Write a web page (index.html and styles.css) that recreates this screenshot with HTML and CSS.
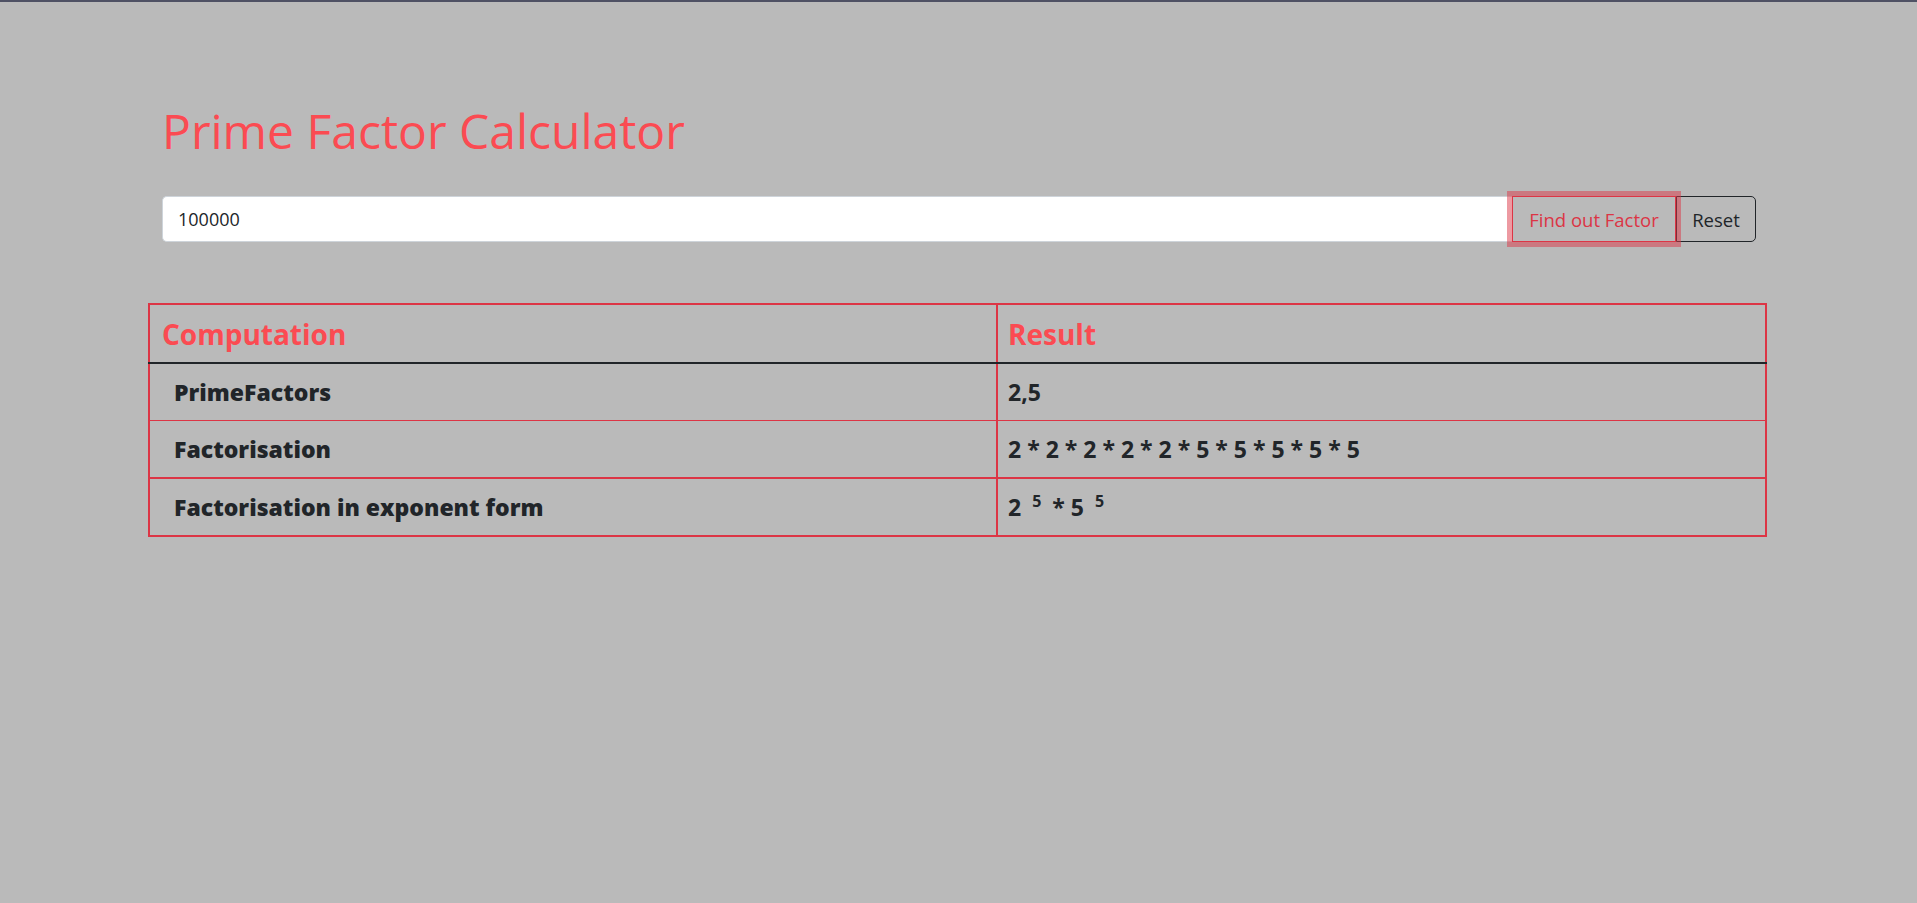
FILE: index.html
```html
<!DOCTYPE html>
<html lang="en">
<head>
<meta charset="utf-8">
<title>Prime Factor Calculator</title>
<link rel="stylesheet" href="styles.css">
</head>
<body>
<div class="topbar"></div>
<main class="page">
  <header class="head">
    <h1 class="title">Prime Factor Calculator</h1>
    <form class="input-group">
      <input class="field" type="text" value="100000">
      <button type="button" class="btn btn-find">Find out Factor</button>
      <button type="reset" class="btn btn-reset">Reset</button>
    </form>
  </header>
  <table class="results">
    <thead>
      <tr>
        <th class="col-a">Computation</th>
        <th class="col-b">Result</th>
      </tr>
    </thead>
    <tbody>
      <tr>
        <th class="row-label">PrimeFactors</th>
        <td class="row-value">2,5</td>
      </tr>
      <tr>
        <th class="row-label">Factorisation</th>
        <td class="row-value">2 * 2 * 2 * 2 * 2 * 5 * 5 * 5 * 5 * 5</td>
      </tr>
      <tr>
        <th class="row-label">Factorisation in exponent form</th>
        <td class="row-value">2 <sup>5</sup> * 5 <sup>5</sup></td>
      </tr>
    </tbody>
  </table>
</main>
</body>
</html>
```

FILE: styles.css
```css
html, body {
  margin: 0;
  padding: 0;
}
body {
  background: #bababa;
  font-family: "Open Sans", "Noto Sans", sans-serif;
  color: #212529;
  min-height: 903px;
}
.topbar {
  height: 2px;
  background: #4f5164;
}
.page {
  padding: 0 150px 0 148px;
}
.head {
  padding: 0 11px 0 14px;
}
.title {
  margin: 0;
  padding-top: 101px;
  font-size: 48px;
  line-height: 56px;
  font-weight: 500;
  color: #fb4b52;
}
.input-group {
  display: flex;
  margin: 0;
  margin-top: 37px;
  height: 46px;
}
.field {
  flex: 1;
  min-width: 0;
  box-sizing: border-box;
  height: 46px;
  border: 1px solid #ced4da;
  border-right: none;
  border-radius: 5px 0 0 5px;
  background: #fff;
  padding: 0 15px;
  font-family: inherit;
  font-size: 18px;
  color: #212529;
  outline: none;
}
.btn {
  box-sizing: border-box;
  height: 46px;
  background: transparent;
  font-family: inherit;
  font-size: 18.5px;
  padding: 0;
  margin: 0;
  cursor: pointer;
}
.btn-find {
  width: 164px;
  border: 1px solid #dc3545;
  color: #dc3545;
  border-radius: 0;
  position: relative;
  z-index: 2;
  box-shadow: 0 0 0 5px rgba(220, 53, 69, 0.5);
}
.btn-reset {
  width: 80px;
  border: 1px solid #212529;
  color: #212529;
  border-radius: 0 5px 5px 0;
}
.results {
  margin-top: 61px;
  width: 100%;
  border-collapse: collapse;
  border: 2px solid #dc3545;
}
.results th,
.results td {
  text-align: left;
  vertical-align: middle;
}
.col-a,
.col-b {
  height: 57px;
  padding: 0 12px;
  font-size: 28px;
  font-weight: 700;
  color: #fb4b52;
  border-bottom: 2px solid #212529;
}
.col-b {
  padding-left: 10px;
}
.col-a {
  width: 822px;
  border-right: 2px solid #dc3545;
}
.row-label,
.row-value {
  height: 56px;
  padding: 0 10px;
  font-size: 23px;
  border-top: 1px solid #dc3545;
}
.row-label {
  padding-left: 24px;
  font-weight: 800;
  border-right: 2px solid #dc3545;
}
.row-value {
  font-weight: 700;
}
tbody tr:first-child .row-label,
tbody tr:first-child .row-value {
  border-top: none;
}
tbody tr:last-child .row-label,
tbody tr:last-child .row-value {
  border-top: 2px solid #dc3545;
}
sup {
  font-size: 16px;
  vertical-align: 9px;
  line-height: 0;
  padding: 0 5px;
}
```
